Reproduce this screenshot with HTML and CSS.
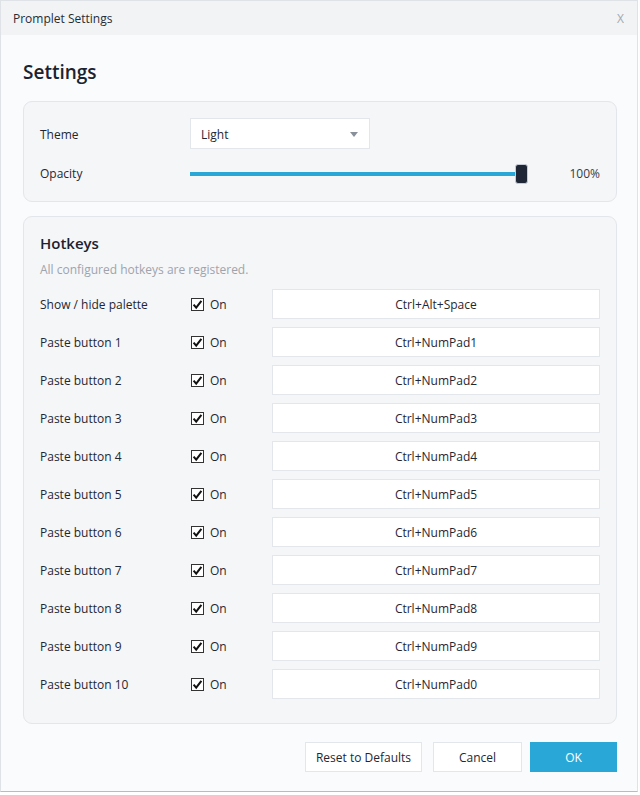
FILE: index.html
```html
<!DOCTYPE html>
<html lang="en">
<head>
    <meta charset="utf-8">
    <title>Promplet Settings</title>
    <link rel="stylesheet" href="styles.css">
</head>
<body>
    <div class="window">
        <div class="titlebar">
            <span class="title">Promplet Settings</span>
            <span class="close">X</span>
        </div>

        <div class="content">
            <h1>Settings</h1>

            <div class="panel general">
                <div class="row">
                    <span class="label">Theme</span>
                    <div class="select">
                        <span>Light</span>
                        <span class="caret"></span>
                    </div>
                </div>
                <div class="row opacity-row">
                    <span class="label">Opacity</span>
                    <div class="slider">
                        <div class="track"></div>
                        <div class="thumb"></div>
                    </div>
                    <span class="value">100%</span>
                </div>
            </div>

            <div class="panel hotkeys">
                <h2>Hotkeys</h2>
                <p class="status">All configured hotkeys are registered.</p>
                <div id="hotkeyList" class="hotkey-list"></div>
            </div>

            <div class="actions">
                <button class="btn reset">Reset to Defaults</button>
                <button class="btn cancel">Cancel</button>
                <button class="btn primary">OK</button>
            </div>
        </div>
    </div>

    <script>
        const hotkeys = [
            { name: 'Show / hide palette', keys: 'Ctrl+Alt+Space' },
            { name: 'Paste button 1', keys: 'Ctrl+NumPad1' },
            { name: 'Paste button 2', keys: 'Ctrl+NumPad2' },
            { name: 'Paste button 3', keys: 'Ctrl+NumPad3' },
            { name: 'Paste button 4', keys: 'Ctrl+NumPad4' },
            { name: 'Paste button 5', keys: 'Ctrl+NumPad5' },
            { name: 'Paste button 6', keys: 'Ctrl+NumPad6' },
            { name: 'Paste button 7', keys: 'Ctrl+NumPad7' },
            { name: 'Paste button 8', keys: 'Ctrl+NumPad8' },
            { name: 'Paste button 9', keys: 'Ctrl+NumPad9' },
            { name: 'Paste button 10', keys: 'Ctrl+NumPad0' }
        ];

        const checkIcon = `<svg viewBox="0 0 13 13" width="13" height="13">
            <rect x="0.5" y="0.5" width="12" height="12" fill="#fff" stroke="#333"/>
            <path d="M2.6 6.6 L5.2 9.6 L10.4 2.8" fill="none" stroke="#111" stroke-width="2"/>
        </svg>`;

        document.getElementById('hotkeyList').innerHTML = hotkeys.map(item => `
            <div class="hotkey-row">
                <span class="label">${item.name}</span>
                <label class="check">${checkIcon}<span>On</span></label>
                <div class="keybox">${item.keys}</div>
            </div>
        `).join('');
    </script>
</body>
</html>
```

FILE: styles.css
```css
body {
    margin: 0;
    background: #ffffff;
    font-family: "Open Sans", "Noto Sans", sans-serif;
    font-size: 12px;
    color: #1f2733;
}

.window {
    width: 638px;
    height: 792px;
    box-sizing: border-box;
    border: 1px solid #dfe3e8;
    border-bottom-color: #b8bcc2;
    background: #fafbfc;
    display: flex;
    flex-direction: column;
}

.titlebar {
    height: 34px;
    flex-shrink: 0;
    background: #f2f3f5;
    display: flex;
    align-items: center;
    justify-content: space-between;
    padding: 0 13px 0 12px;
}

.title {
    color: #262c36;
}

.close {
    color: #a3a8b0;
    font-size: 12px;
}

.content {
    padding: 0 20px 0 22px;
}

h1 {
    font-size: 19px;
    font-weight: 600;
    line-height: 28px;
    margin: 23px 0 15px;
    color: #1b2230;
}

.panel {
    background: #f5f6f8;
    border: 1px solid #e3e6ea;
    border-radius: 9px;
}

.general {
    padding: 16px 16px 18px;
}

.row {
    display: flex;
    align-items: center;
}

.label {
    width: 150px;
    flex-shrink: 0;
}

.general .row:first-child .label {
    padding-top: 1px;
}

.select {
    width: 180px;
    height: 31px;
    box-sizing: border-box;
    background: #ffffff;
    border: 1px solid #e3e6ea;
    display: flex;
    align-items: center;
    justify-content: space-between;
    padding: 1px 11px 0 10px;
}

.caret {
    width: 0;
    height: 0;
    border-left: 4px solid transparent;
    border-right: 4px solid transparent;
    border-top: 5px solid #8a9099;
}

.opacity-row {
    margin-top: 15px;
    height: 19px;
}

.slider {
    width: 338px;
    height: 19px;
    display: flex;
    align-items: center;
}

.track {
    flex: 1;
    height: 4px;
    background: #29a8d8;
}

.thumb {
    width: 11px;
    height: 18px;
    background: #1f2636;
    border: 1px solid #c5ccd6;
    border-radius: 3px;
    margin-left: -4px;
}

.value {
    flex: 1;
    text-align: right;
    color: #333b48;
}

.general + .hotkeys {
    margin-top: 14px;
}

.hotkeys {
    padding: 15px 16px 24px;
}

h2 {
    font-size: 15px;
    font-weight: 600;
    line-height: 22px;
    margin: 0;
    color: #1b2230;
}

.status {
    margin: 8px 0 11px;
    line-height: 16px;
    color: #9ea4ad;
}

.hotkey-list {
    display: flex;
    flex-direction: column;
    gap: 8px;
}

.hotkey-row {
    display: flex;
    align-items: center;
    height: 30px;
}

.check {
    width: 82px;
    box-sizing: border-box;
    flex-shrink: 0;
    display: flex;
    align-items: center;
    gap: 6px;
    padding-left: 1px;
}

.check svg {
    display: block;
}

.keybox {
    flex: 1;
    height: 30px;
    box-sizing: border-box;
    background: #ffffff;
    border: 1px solid #e3e6ea;
    display: flex;
    align-items: center;
    justify-content: center;
}

.actions {
    display: flex;
    justify-content: flex-end;
    margin-top: 18px;
}

.btn {
    height: 30px;
    font-family: inherit;
    font-size: 12px;
    color: #1f2733;
    background: #ffffff;
    border: 1px solid #e3e6ea;
    padding: 0;
    cursor: pointer;
}

.reset {
    width: 117px;
}

.cancel {
    width: 89px;
    margin-left: 11px;
}

.primary {
    width: 87px;
    margin-left: 8px;
    background: #29a8d8;
    border-color: #29a8d8;
    color: #ffffff;
}
```
